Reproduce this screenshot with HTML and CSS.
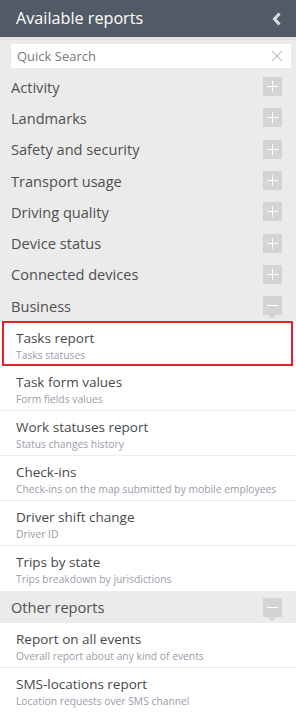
FILE: index.html
```html
<!DOCTYPE html>
<html>
<head>
<meta charset="utf-8">
<link rel="stylesheet" href="styles.css">
</head>
<body>
<div class="panel">
  <div class="header">
    <span class="title">Available reports</span>
    <svg class="chev" width="10" height="14" viewBox="0 0 10 14"><path d="M7.5 1.5 L2.5 7 L7.5 12.5" fill="none" stroke="#d9dde1" stroke-width="3"/></svg>
  </div>
  <div class="search-wrap">
    <div class="search">
      <span class="ph">Quick Search</span>
      <svg class="clear" width="12" height="12" viewBox="0 0 12 12"><path d="M1 1 L11 11 M11 1 L1 11" stroke="#c8c8cc" stroke-width="1.2"/></svg>
    </div>
  </div>
  <div class="cat"><span>Activity</span><span class="tog plus"></span></div>
  <div class="cat"><span>Landmarks</span><span class="tog plus"></span></div>
  <div class="cat"><span>Safety and security</span><span class="tog plus"></span></div>
  <div class="cat"><span>Transport usage</span><span class="tog plus"></span></div>
  <div class="cat"><span>Driving quality</span><span class="tog plus"></span></div>
  <div class="cat"><span>Device status</span><span class="tog plus"></span></div>
  <div class="cat"><span>Connected devices</span><span class="tog plus"></span></div>
  <div class="cat"><span>Business</span><span class="tog minus"></span></div>
  <div class="items">
    <div class="item selected"><div class="it">Tasks report</div><div class="sub">Tasks statuses</div></div>
    <div class="item"><div class="it">Task form values</div><div class="sub">Form fields values</div></div>
    <div class="item"><div class="it">Work statuses report</div><div class="sub">Status changes history</div></div>
    <div class="item"><div class="it">Check-ins</div><div class="sub">Check-ins on the map submitted by mobile employees</div></div>
    <div class="item"><div class="it">Driver shift change</div><div class="sub">Driver ID</div></div>
    <div class="item last"><div class="it">Trips by state</div><div class="sub">Trips breakdown by jurisdictions</div></div>
  </div>
  <div class="cat"><span>Other reports</span><span class="tog minus"></span></div>
  <div class="items grow">
    <div class="item"><div class="it">Report on all events</div><div class="sub">Overall report about any kind of events</div></div>
    <div class="item last"><div class="it">SMS-locations report</div><div class="sub">Location requests over SMS channel</div></div>
  </div>
</div>
</body>
</html>
```
FILE: styles.css
```css
html, body {
  margin: 0;
  padding: 0;
  background: #ebebeb;
}
.panel {
  width: 296px;
  height: 716px;
  overflow: hidden;
  display: flex;
  flex-direction: column;
  font-family: "Open Sans", "Liberation Sans", sans-serif;
  background: #ebebeb;
}
.header {
  flex: none;
  height: 37px;
  background: #525b65;
  display: flex;
  align-items: center;
  justify-content: space-between;
  padding: 0 14px 0 16px;
  border-bottom: 3px solid #e3e3e3;
}
.title {
  color: #ffffff;
  font-size: 16.2px;
  line-height: 37px;
}
.chev {
  display: block;
}
.search-wrap {
  flex: none;
  padding: 4px 5px 3px 11px;
}
.search {
  height: 24px;
  background: #ffffff;
  display: flex;
  align-items: center;
  justify-content: space-between;
  padding: 0 8px 0 6px;
}
.ph {
  color: #7a7a7a;
  font-size: 13px;
}
.clear {
  display: block;
}
.cat {
  flex: none;
  height: 31.3px;
  display: flex;
  align-items: center;
  justify-content: space-between;
  padding: 0 14px 0 11px;
  color: #505050;
  font-size: 14.6px;
  background: #ebebeb;
}
.tog {
  position: relative;
  width: 19px;
  height: 19px;
  background: #d4d4d4;
}
.plus::before, .plus::after, .minus::before {
  content: "";
  position: absolute;
  background: #ffffff;
}
.plus::before {
  left: 4px;
  top: 9px;
  width: 11px;
  height: 1px;
}
.plus::after {
  left: 9px;
  top: 4px;
  width: 1px;
  height: 11px;
}
.minus::before {
  left: 4px;
  top: 9px;
  width: 11px;
  height: 1px;
}
.minus::after {
  content: "";
  position: absolute;
  left: 5px;
  top: 19px;
  border-left: 4.5px solid transparent;
  border-right: 4.5px solid transparent;
  border-top: 4px solid #d4d4d4;
}
.items {
  flex: none;
  background: #ffffff;
}
.items.grow {
  flex: 1 0 auto;
}
.item {
  height: 45px;
  box-sizing: border-box;
  padding: 7px 16px 0;
  border-bottom: 1px solid #ececec;
}
.item.last {
  border-bottom: none;
}
.item.selected {
  border: 2px solid #e8202a;
  margin: 0 3px 0 2px;
  padding: 6px 12px 0;
}
.it {
  font-size: 13.5px;
  line-height: 18px;
  color: #484848;
}
.sub {
  font-size: 10.3px;
  line-height: 16px;
  color: #9c9cab;
}
```
